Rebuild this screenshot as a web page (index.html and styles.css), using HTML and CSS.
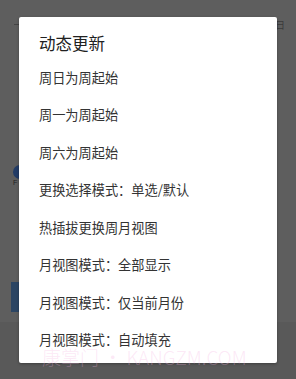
FILE: index.html
```html
<!DOCTYPE html>
<html lang="zh">
<head>
<meta charset="utf-8">
<link rel="stylesheet" href="styles.css">
</head>
<body>
<div class="screen">
  <div class="backdrop">
    <div class="bg-line"></div>
    <div class="bg-day">日</div>
    <div class="bg-logo"><svg width="8" height="14" viewBox="0 0 8 14"><circle cx="8" cy="7" r="7" fill="#233c66"/></svg><span class="bg-f">F</span></div>
    <div class="bg-rect"></div>
    <div class="bg-band"></div>
  </div>
  <div class="dialog">
    <div class="title">动态更新</div>
    <ul class="list">
      <li class="item">周日为周起始</li>
      <li class="item">周一为周起始</li>
      <li class="item">周六为周起始</li>
      <li class="item">更换选择模式：单选/默认</li>
      <li class="item">热插拔更换周月视图</li>
      <li class="item">月视图模式：全部显示</li>
      <li class="item">月视图模式：仅当前月份</li>
      <li class="item">月视图模式：自动填充</li>
    </ul>
  </div>
  <div class="watermark">康掌门 • KANGZM.COM</div>
</div>
</body>
</html>
```
FILE: styles.css
```css
html, body {
  margin: 0;
  padding: 0;
}
body {
  font-family: "Noto Sans CJK SC", "Noto Sans", sans-serif;
  background: #5d5d5d;
}
.screen {
  position: relative;
  width: 296px;
  height: 379px;
  overflow: hidden;
  background: #5e5e5e;
  padding-top: 17px;
  box-sizing: border-box;
}
.backdrop {
  position: absolute;
  inset: 0;
}
.bg-line {
  position: absolute;
  left: 14px;
  top: 24px;
  width: 6px;
  height: 1px;
  background: #444;
}
.bg-day {
  position: absolute;
  left: 275px;
  top: 18px;
  font-size: 10px;
  line-height: 14px;
  color: #3a3a3a;
}
.bg-logo {
  position: absolute;
  left: 12px;
  top: 165px;
  width: 8px;
  display: flex;
  flex-direction: column;
}
.bg-f {
  font-family: "Liberation Sans", sans-serif;
  font-size: 7px;
  line-height: 7px;
  color: #222;
  margin-left: 1px;
}
.bg-rect {
  position: absolute;
  left: 11px;
  top: 282px;
  width: 9px;
  height: 30px;
  background: #2c4563;
}
.bg-band {
  position: absolute;
  left: 0;
  right: 0;
  top: 322px;
  bottom: 0;
  background: #595959;
}
.dialog {
  position: relative;
  margin-left: 19px;
  width: 258px;
  height: 346px;
  background: #ffffff;
  border-radius: 2px;
  box-shadow: 0 1px 3px rgba(0,0,0,0.3);
  box-sizing: border-box;
  padding: 0 20px;
}
.title {
  padding-top: 13.5px;
  padding-bottom: 4.25px;
  font-size: 16.5px;
  line-height: 24px;
  color: #212121;
}
.list {
  list-style: none;
  margin: 0;
  padding: 0;
}
.item {
  box-sizing: border-box;
  height: 37.5px;
  padding: 10.75px 0;
  line-height: 16px;
  font-size: 13.2px;
  color: #333333;
  white-space: nowrap;
}
.watermark {
  position: absolute;
  left: 42px;
  top: 348px;
  font-size: 19px;
  line-height: 17px;
  font-weight: 300;
  color: rgba(245, 180, 225, 0.3);
  white-space: nowrap;
  font-family: "Noto Sans CJK SC", "Noto Sans", sans-serif;
}
```
